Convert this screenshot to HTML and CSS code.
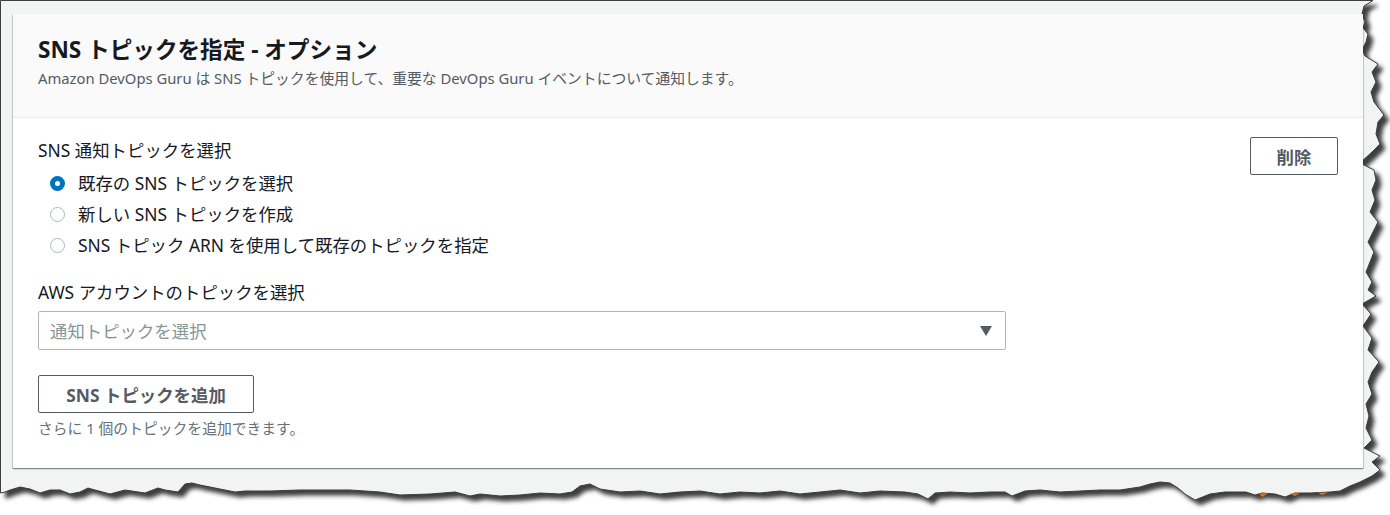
FILE: index.html
```html
<!DOCTYPE html>
<html lang="ja">
<head>
  <meta charset="UTF-8">
  <title>SNS トピックを指定</title>
  <link rel="stylesheet" href="styles.css">
</head>
<body>
  <div class="sheet">
    <!-- ちぎれた紙の縁 -->
    <svg class="torn" width="1390" height="515" viewBox="0 0 1390 515">
      <defs>
        <filter id="shadow" x="-5%" y="-5%" width="110%" height="115%">
          <feDropShadow dx="5" dy="5" stdDeviation="2.2" flood-color="#2b2b2b" flood-opacity="0.9"/>
        </filter>
      </defs>
      <path filter="url(#shadow)" fill="#f2f3f3" stroke="#3c3c3c" stroke-width="1"
        d="M0.5,0.5 L1373,0.5 L1364,6 L1362,14 L1365,22 L1363,28 L1368,34 L1366,42 L1362,50 L1365,56 L1378,64 L1372,72 L1376,82 L1371,92 L1374,102 L1384,115 L1378,122 L1376,134 L1380,144 L1372,152 L1360,163 L1374,170 L1376,180 L1372,190 L1375,200 L1370,212 L1378,222 L1373,232 L1368,242 L1374,252 L1370,262 L1366,272 L1372,282 L1368,290 L1376,296 L1362,304 L1371,314 L1363,326 L1372,338 L1368,350 L1379,362 L1372,372 L1368,382 L1372,394 L1366,404 L1369,416 L1366,428 L1372,440 L1364,448 L1380,456 L1372,462 L1380,470 L1372,476 L1360,482 L1350,486 L1340,491 L1330,492 L1310,493 L1295,493 L1285,497 L1275,494 L1262,493 L1255,495 L1246,492 L1225,492 L1210,494 L1195,500 L1185,494 L1178,488 L1170,483 L1160,482 L1150,484 L1140,487 L1120,490 L1100,490 L1080,491 L1060,492 L1040,490 L1025,491 L1012,496 L1005,492 L990,492 L970,493 L950,492 L935,493 L928,499 L918,494 L905,492 L880,491 L860,493 L840,490 L820,492 L800,494 L780,491 L760,493 L740,492 L720,494 L700,491 L680,492 L660,494 L640,491 L620,492 L600,489 L590,484 L580,486 L572,492 L560,494 L540,493 L520,495 L500,496 L480,494 L470,496 L455,492 L430,494 L400,495 L380,492 L350,490 L320,490 L300,490 L270,491 L245,491 L235,492 L215,488 L200,485 L192,483 L185,484 L178,492 L165,490 L158,488 L145,493 L125,490 L110,494 L95,490 L88,488 L80,492 L70,494 L60,490 L50,490 L40,493 L30,489 L20,487 L10,490 L5,492 L0.5,493 Z"/>
      <path fill="#ec7211" d="M1259,493.5 L1268,493.3 L1262,497 Z M1290,493.5 L1300,493.2 L1295,496 Z M1318,492.8 L1328,492.5 L1322,495 Z"/>
    </svg>

    <section class="card">
      <header class="card-header">
        <h2>SNS トピックを指定 - オプション</h2>
        <p class="desc">Amazon DevOps Guru は SNS トピックを使用して、重要な DevOps Guru イベントについて通知します。</p>
      </header>

      <div class="card-body">
        <div class="fields">
          <div class="field">
            <div class="label">SNS 通知トピックを選択</div>
            <div class="radios">
              <label class="radio checked"><span class="dot"></span>既存の SNS トピックを選択</label>
              <label class="radio"><span class="dot"></span>新しい SNS トピックを作成</label>
              <label class="radio"><span class="dot"></span>SNS トピック ARN を使用して既存のトピックを指定</label>
            </div>
          </div>

          <div class="field">
            <div class="label">AWS アカウントのトピックを選択</div>
            <div class="select">
              <span class="placeholder">通知トピックを選択</span>
              <span class="caret"></span>
            </div>
          </div>

          <div class="add">
            <button class="btn">SNS トピックを追加</button>
            <div class="hint">さらに 1 個のトピックを追加できます。</div>
          </div>
        </div>

        <button class="btn btn-delete">削除</button>
      </div>
    </section>
  </div>
</body>
</html>
```

FILE: styles.css
```css
body {
  margin: 0;
  background: #fff;
  font-family: "Noto Sans", "Noto Sans CJK JP", sans-serif;
  color: #16191f;
  overflow: hidden;
}
.sheet {
  position: relative;
  width: 1390px;
  height: 515px;
  padding: 14px 0 0 13px;
  box-sizing: border-box;
}
.torn {
  position: absolute;
  left: 0;
  top: 0;
  z-index: 0;
}
.card {
  position: relative;
  z-index: 1;
  width: 1350px;
  height: 454px;
  background: #fff;
  box-shadow: 0 1px 1px 0 rgba(0,28,36,0.3), 1px 1px 1px 0 rgba(0,28,36,0.15), -1px 1px 1px 0 rgba(0,28,36,0.15);
  display: flex;
  flex-direction: column;
}
.card-header {
  background: #fafafa;
  border-bottom: 1px solid #eaeded;
  height: 104px;
  box-sizing: border-box;
  padding: 22px 25px 0 25px;
}
.card-header h2 {
  margin: 0;
  font-size: 22.6px;
  line-height: 28px;
  font-weight: 700;
}
.desc {
  margin: 4px 0 0;
  font-size: 14.8px;
  line-height: 21px;
  color: #545b64;
}
.card-body {
  display: flex;
  justify-content: space-between;
  align-items: flex-start;
  padding: 19px 25px 0 25px;
}
.fields {
  width: 968px;
  display: flex;
  flex-direction: column;
}
.label {
  font-size: 17.4px;
  line-height: 24px;
  margin-top: 1px;
}
.radios {
  display: flex;
  flex-direction: column;
  padding: 9px 0 0 12px;
  gap: 7px;
}
.radio {
  display: flex;
  align-items: center;
  gap: 13px;
  font-size: 17.4px;
  line-height: 24px;
}
.dot {
  width: 15px;
  height: 15px;
  border-radius: 50%;
  border: 1.6px solid #aab7b8;
  box-sizing: border-box;
  background: #fff;
}
.radio.checked .dot {
  border: 5px solid #0073bb;
}
.field + .field {
  margin-top: 22px;
}
.select {
  margin-top: 7px;
  height: 39px;
  box-sizing: border-box;
  border: 1px solid #aab7b8;
  border-radius: 2px;
  display: flex;
  align-items: center;
  justify-content: space-between;
  padding: 0 13px 0 11px;
}
.placeholder {
  font-size: 17.4px;
  color: #879596;
}
.caret {
  width: 0;
  height: 0;
  border-left: 6px solid transparent;
  border-right: 6px solid transparent;
  border-top: 10px solid #545b64;
}
.add {
  margin-top: 25px;
  display: flex;
  flex-direction: column;
  align-items: flex-start;
}
.btn {
  font-family: inherit;
  font-size: 17.4px;
  font-weight: 700;
  color: #545b64;
  background: #fff;
  border: 1px solid #545b64;
  border-radius: 2px;
  height: 38px;
  padding: 0 25px;
  cursor: pointer;
}
.add .btn {
  width: 216px;
}
.hint {
  margin-top: 5px;
  font-size: 14.8px;
  line-height: 20px;
  color: #687078;
}
.btn-delete {
  width: 88px;
  padding: 0;
}
```
